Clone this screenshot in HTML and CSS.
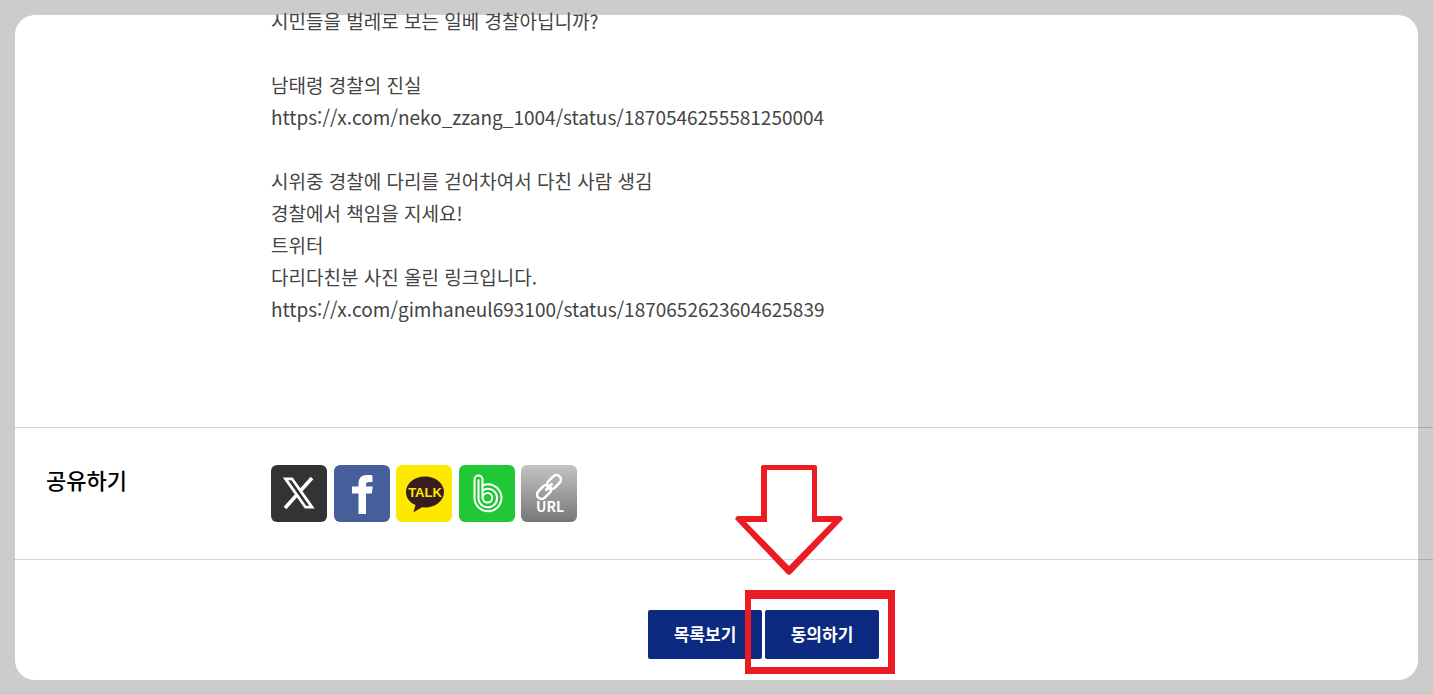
FILE: index.html
```
<!DOCTYPE html>
<html lang="ko">

<head>
    <meta charset="utf-8" />
    <title>공유하기</title>
    <link rel="stylesheet" href="styles.css">
</head>

<body>
    <main class="panel">
        <div class="content">
            <p>시민들을 벌레로 보는 일베 경찰아닙니까?</p>
            <p>남태령 경찰의 진실<br>
                https://x.com/neko_zzang_1004/status/1870546255581250004</p>
            <p>시위중 경찰에 다리를 걷어차여서 다친 사람 생김<br>
                경찰에서 책임을 지세요!<br>
                트위터<br>
                다리다친분 사진 올린 링크입니다.<br>
                https://x.com/gimhaneul693100/status/1870652623604625839</p>
        </div>

        <section class="share">
            <h2>공유하기</h2>
            <div class="share-list">
                <a href="#" aria-label="X">
                    <svg viewBox="0 0 56 57">
                        <rect width="56" height="57" rx="6" fill="#333" />
                        <path d="M41 13L14 43" fill="none" stroke="#fff" stroke-width="3.600" />
                        <path d="M14.500 13.800h6.500l20 28.400h-6.500z" fill="#333" stroke="#fff" stroke-width="2.800" />
                    </svg>
                </a>
                <a href="#" aria-label="Facebook">
                    <svg viewBox="0 0 56 57">
                        <rect width="56" height="57" rx="6" fill="#465f9b" />
                        <path d="M38.500 10.500v6.500H35c-2.300 0-3 1-3 3v1.500h6.700l-.9 7H32V49h-7.500V28.500H18v-7h6.500V19c0-6 3-9 8.500-9 2.500 0 4 .1 5.500.5z" fill="#fff" />
                    </svg>
                </a>
                <a href="#" aria-label="KakaoTalk">
                    <svg viewBox="0 0 56 57">
                        <rect width="56" height="57" rx="6" fill="#ffe800" />
                        <path d="M29 11.500c10.500 0 19 6.800 19 15.500s-8.500 15.500-19 15.500l-3-.2-8.500 5 2-7.300C13.500 37.500 10 32.800 10 27c0-8.700 8.500-15.500 19-15.500z" fill="#371d1e" />
                        <text x="29" y="32" class="talk">TALK</text>
                    </svg>
                </a>
                <a href="#" aria-label="BAND">
                    <svg viewBox="0 0 56 57">
                        <rect width="56" height="57" rx="6" fill="#22c736" />
                        <g fill="none" stroke="#fff" stroke-width="2">
                            <path d="M15.500 33V14.500a4 4 0 0 1 8 0v6a13.500 13.500 0 1 1-8 12.500z" />
                            <path d="M19.500 14.500V33a9.300 9.300 0 1 0 4-7.600" />
                            <path d="M23.500 20.500V33" />
                            <circle cx="28.500" cy="32.800" r="4.800" />
                        </g>
                    </svg>
                </a>
                <a href="#" aria-label="URL">
                    <svg viewBox="0 0 56 57">
                        <defs>
                            <linearGradient id="url-bg" x1="0" y1="0" x2="0" y2="1">
                                <stop offset="0" stop-color="#c4c4c4" />
                                <stop offset="1" stop-color="#777" />
                            </linearGradient>
                        </defs>
                        <rect width="56" height="57" rx="6" fill="url(#url-bg)" />
                        <g fill="none" stroke="#fff" stroke-width="2.600" transform="rotate(-45 28 22)">
                            <rect x="13" y="17.500" width="16" height="9" rx="4.500" />
                            <rect x="27" y="17.500" width="16" height="9" rx="4.500" />
                            <path d="M23 22h10" />
                        </g>
                        <text x="29" y="47" class="url">URL</text>
                    </svg>
                </a>
            </div>
        </section>

        <div class="buttons">
            <button type="button">목록보기</button>
            <div class="agree">
                <button type="button">동의하기</button>
                <svg class="arrow" viewBox="0 0 108 110">
                    <path fill-rule="evenodd" d="M26 1l2-1h52l2 1v50h24l2 3-52 55-2 1-2-1L0 54l2-3h24zM32 5v52H11l43 44 43-44H77V5z" />
                </svg>
                <div class="mark"></div>
            </div>
        </div>
    </main>
</body>

</html>
```
FILE: styles.css
```
* {
    box-sizing: border-box;
}

body {
    display: flex;
    min-height: 100vh;
    margin: 0;
    padding: 15px;
    background-color: #ccc;
    font-family: "Noto Sans CJK KR", sans-serif;
    overflow: hidden;
}

.panel {
    flex: 1;
    min-width: 0;
    background-color: #fff;
    border-radius: 20px;
}

.content {
    margin-top: -10px;
    padding: 0 32px 102px 256px;
    color: #444;
    font-size: 19px;
    line-height: 32px;
}

.content p {
    margin: 0 0 32px;
}

.content p:last-child {
    margin-bottom: 0;
}

/* the rules run past the panel to the window edge */
.share {
    display: flex;
    margin: 0 -15px 0 -1px;
    padding: 37px 32px;
    border-top: 1px solid rgba(0, 0, 0, 0.16);
    border-bottom: 1px solid rgba(0, 0, 0, 0.16);
}

.share h2 {
    flex: 0 0 225px;
    margin: 0;
    color: #000;
    font-size: 22px;
    font-weight: 500;
    line-height: 28px;
}

.share-list {
    display: flex;
    justify-content: space-between;
    width: 306px;
}

.share-list a,
.share-list svg {
    display: block;
    width: 56px;
    height: 57px;
}

.talk {
    fill: #ffe800;
    font-family: "Liberation Sans", sans-serif;
    font-size: 13px;
    font-weight: 700;
    text-anchor: middle;
}

.url {
    fill: #fff;
    font-size: 14px;
    font-weight: 700;
    text-anchor: middle;
}

.buttons {
    display: flex;
    justify-content: center;
    gap: 3px;
    padding: 50px 0 21px 94px;
}

button {
    display: block;
    width: 114px;
    height: 49px;
    padding: 0 0 2px;
    border: 0;
    border-radius: 2px;
    background-color: #0c2a80;
    color: #fff;
    font-family: inherit;
    font-size: 17px;
    font-weight: 700;
}

.agree {
    position: relative;
}

.arrow {
    position: absolute;
    top: -145px;
    left: -30px;
    width: 108px;
    height: 110px;
    fill: #ed1c24;
    pointer-events: none;
}

.mark {
    position: absolute;
    top: -20px;
    left: -20px;
    width: 150px;
    height: 84px;
    border: solid #ed1c24;
    border-width: 9px 7px 7px 6px;
    pointer-events: none;
}
```
